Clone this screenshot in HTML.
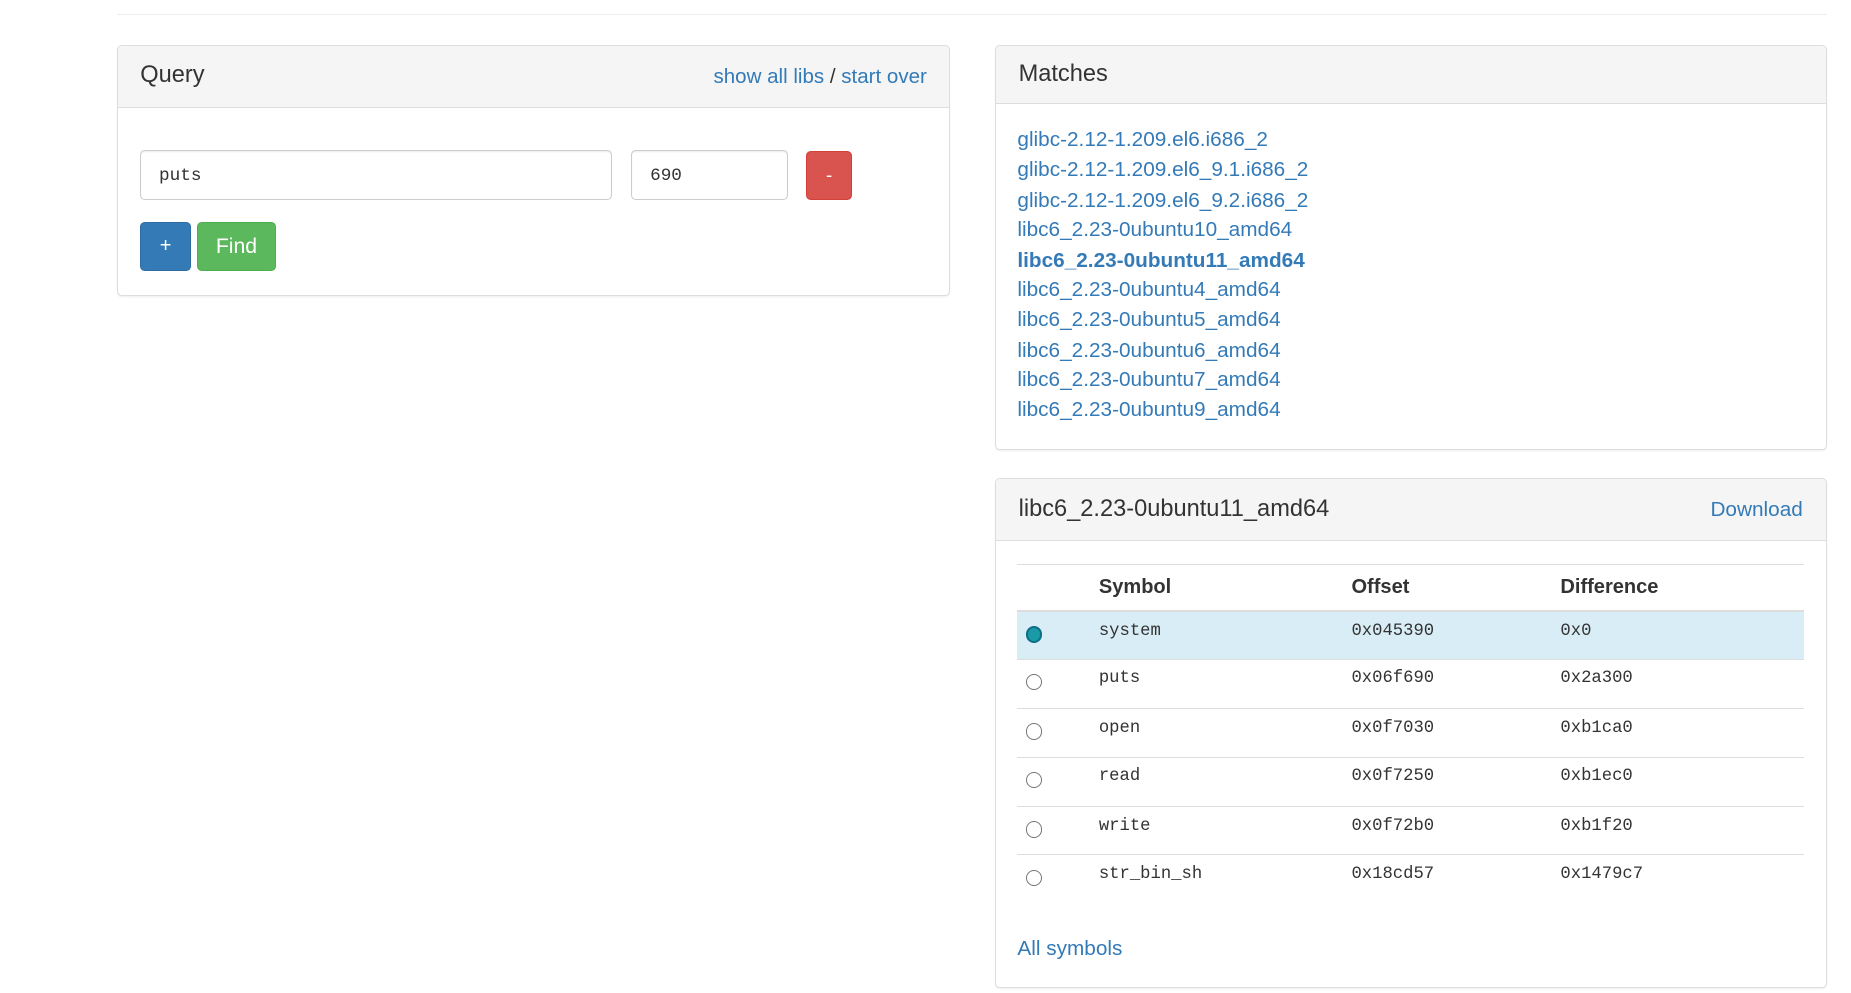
<!DOCTYPE html>
<html><head><meta charset="utf-8"><style>
html,body{margin:0;padding:0;background:#fff;width:1851px;height:993px;overflow:hidden}
#z{zoom:1.1805;position:relative;width:1568px;height:841px;font-family:"Liberation Sans",Arial,sans-serif;color:#333}
.abs{position:absolute}
.panel{position:absolute;border:1px solid #ddd;border-radius:4px;background:#fff;box-shadow:0 1px 1px rgba(0,0,0,.05);box-sizing:border-box}
.ph{position:absolute;left:0;right:0;top:0;background:#f5f5f5;border-bottom:1px solid #ddd;border-radius:3px 3px 0 0}
.title{position:absolute;left:19px;font-size:20px;color:#333}
a{color:#337ab7;text-decoration:none}
.mono{font-family:"Liberation Mono","DejaVu Sans Mono",monospace}
.inp{position:absolute;border:1px solid #ccc;border-radius:4px;box-sizing:border-box;font-size:15px;line-height:43px;padding-left:15px;box-shadow:inset 0 1px 1px rgba(0,0,0,.075)}
.btn{position:absolute;border-radius:4px;color:#fff;text-align:center;box-sizing:border-box}
.lk{position:absolute;left:18px;font-size:17.6px}
.row{position:absolute;left:18px;width:666px;height:41px;border-top:1px solid #ddd;box-sizing:border-box}
.row span{position:absolute;top:8px;font-size:14.6px}
.rad{position:absolute;left:7px;top:12px;width:14px;height:14px;border:1px solid #767676;border-radius:50%;box-sizing:border-box;background:#fff}
</style></head><body><div id="z">
<div class="abs" style="left:99px;top:12px;width:1449px;border-top:1px solid #eee"></div>

<div class="panel" style="left:99px;top:38px;width:706px;height:213px">
 <div class="ph" style="height:52px"></div>
 <div class="title" style="top:14px">Query</div>
 <div class="abs" style="right:19px;top:16px;font-size:17.4px"><a>show all libs</a> / <a>start over</a></div>
 <div class="inp mono" style="left:19px;top:88px;width:400px;height:43px">puts</div>
 <div class="inp mono" style="left:435px;top:88px;width:133px;height:43px">690</div>
 <div class="btn" style="left:583px;top:89px;width:39px;height:42px;background:#d9534f;border:1px solid #d43f3a;line-height:40px;font-size:16px">-</div>
 <div class="btn" style="left:19px;top:149px;width:43px;height:42px;background:#337ab7;border:1px solid #2e6da4;line-height:40px;font-size:17px">+</div>
 <div class="btn" style="left:67px;top:149px;width:67px;height:42px;background:#5cb85c;border:1px solid #4cae4c;line-height:40px;font-size:18px">Find</div>
</div>

<div class="panel" style="left:843px;top:38px;width:705px;height:343px">
 <div class="ph" style="height:48px"></div>
 <div class="title" style="top:13px">Matches</div>
 <a class="lk" style="top:70px">glibc-2.12-1.209.el6.i686_2</a>
 <a class="lk" style="top:95px">glibc-2.12-1.209.el6_9.1.i686_2</a>
 <a class="lk" style="top:121px">glibc-2.12-1.209.el6_9.2.i686_2</a>
 <a class="lk" style="top:146px">libc6_2.23-0ubuntu10_amd64</a>
 <a class="lk" style="top:172px;font-weight:bold">libc6_2.23-0ubuntu11_amd64</a>
 <a class="lk" style="top:197px">libc6_2.23-0ubuntu4_amd64</a>
 <a class="lk" style="top:222px">libc6_2.23-0ubuntu5_amd64</a>
 <a class="lk" style="top:248px">libc6_2.23-0ubuntu6_amd64</a>
 <a class="lk" style="top:273px">libc6_2.23-0ubuntu7_amd64</a>
 <a class="lk" style="top:298px">libc6_2.23-0ubuntu9_amd64</a>
</div>

<div class="panel" style="left:843px;top:405px;width:705px;height:432px">
 <div class="ph" style="height:52px"></div>
 <div class="title" style="top:14px">libc6_2.23-0ubuntu11_amd64</div>
 <a class="abs" style="right:20px;top:16px;font-size:17.6px">Download</a>
 <div class="row" style="top:72px;height:40px;font-weight:bold;font-size:17px">
  <div class="abs" style="left:69px;top:9px">Symbol</div>
  <div class="abs" style="left:283px;top:9px">Offset</div>
  <div class="abs" style="left:460px;top:9px">Difference</div>
 </div>
 <div class="row mono" style="top:111px;background:#d9edf7;border-top:2px solid #ddd"><div class="rad" style="background:#1a9aa6;border:2px solid #0b6f86"></div><span style="left:69px">system</span><span style="left:283px">0x045390</span><span style="left:460px">0x0</span></div>
 <div class="row mono" style="top:152px"><div class="rad"></div><span style="left:69px">puts</span><span style="left:283px">0x06f690</span><span style="left:460px">0x2a300</span></div>
 <div class="row mono" style="top:194px"><div class="rad"></div><span style="left:69px">open</span><span style="left:283px">0x0f7030</span><span style="left:460px">0xb1ca0</span></div>
 <div class="row mono" style="top:235px"><div class="rad"></div><span style="left:69px">read</span><span style="left:283px">0x0f7250</span><span style="left:460px">0xb1ec0</span></div>
 <div class="row mono" style="top:277px"><div class="rad"></div><span style="left:69px">write</span><span style="left:283px">0x0f72b0</span><span style="left:460px">0xb1f20</span></div>
 <div class="row mono" style="top:318px"><div class="rad"></div><span style="left:69px">str_bin_sh</span><span style="left:283px">0x18cd57</span><span style="left:460px">0x1479c7</span></div>
 <a class="lk" style="top:388px">All symbols</a>
</div>
</div></body></html>
